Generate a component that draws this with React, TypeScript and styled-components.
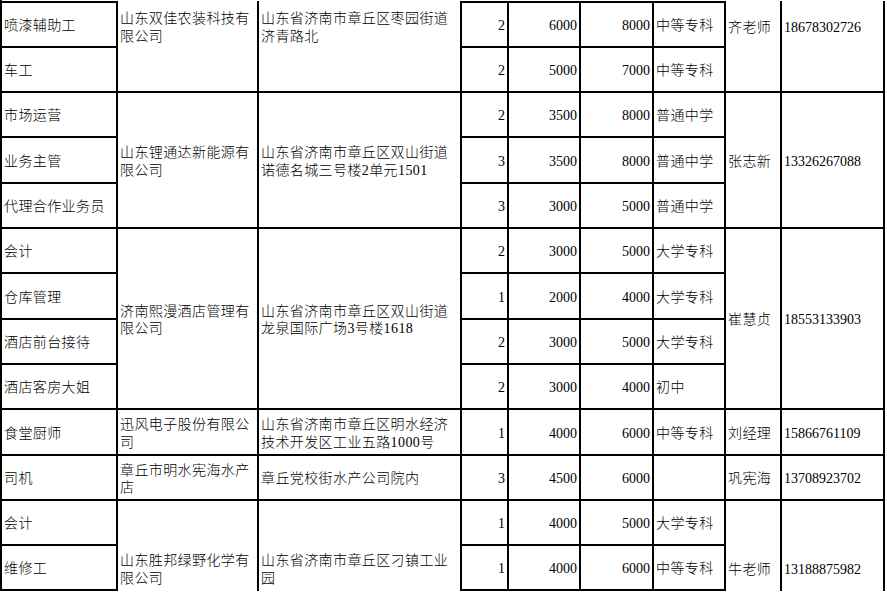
import styled, { createGlobalStyle } from "styled-components";

const GlobalStyle = createGlobalStyle`
  body {
    margin: 0;
    background: #fff;
  }
`;

const Sheet = styled.div`
  display: grid;
  grid-template-columns: 116px 141px 203px 47px 72px 73px 72px 56px 103px;
  grid-template-rows: 47px 45px 45px 46px 45px 45px 46px 45px 45px 46px 45px 45px 45px;
  width: max-content;
  padding-top: 1px;
  border-left: 2px solid #000;
  font-family: "Liberation Serif", "Noto Sans CJK SC", serif;
  font-size: 14px;
  font-weight: 300;
  line-height: 17.5px;
  color: #000;
`;

type CellProps = {
  $span?: number;
  $right?: boolean;
  $top?: boolean;
  $open?: boolean;
  $lift?: number;
  $drop?: number;
  $num?: boolean;
};

const Cell = styled.div<CellProps>`
  grid-row: span ${(p) => p.$span ?? 1};
  display: flex;
  align-items: center;
  justify-content: ${(p) => (p.$right ? "flex-end" : "flex-start")};
  box-sizing: border-box;
  min-width: 0;
  border-right: 2px solid #000;
  border-bottom: ${(p) => (p.$open ? "none" : "2px solid #000")};
  border-top: ${(p) => (p.$top ? "2px solid #000" : "none")};
  padding: ${(p) => (p.$drop ?? 0) + 3}px 2px ${(p) => p.$lift ?? 0}px 2px;
  letter-spacing: ${(p) => (p.$num ? "0" : "0.4px")};
  word-break: break-all;
`;

type Job = {
  title: string;
  count: number;
  min: number;
  max: number;
  edu: string;
};

type Group = {
  company: string;
  address: string;
  contact: string;
  phone: string;
  jobs: Job[];
  edge?: "top" | "bottom";
};

const groups: Group[] = [
  {
    company: "山东双佳农装科技有限公司",
    address: "山东省济南市章丘区枣园街道济青路北",
    contact: "齐老师",
    phone: "18678302726",
    edge: "top",
    jobs: [
      { title: "喷漆辅助工", count: 2, min: 6000, max: 8000, edu: "中等专科" },
      { title: "车工", count: 2, min: 5000, max: 7000, edu: "中等专科" },
    ],
  },
  {
    company: "山东锂通达新能源有限公司",
    address: "山东省济南市章丘区双山街道诺德名城三号楼2单元1501",
    contact: "张志新",
    phone: "13326267088",
    jobs: [
      { title: "市场运营", count: 2, min: 3500, max: 8000, edu: "普通中学" },
      { title: "业务主管", count: 3, min: 3500, max: 8000, edu: "普通中学" },
      { title: "代理合作业务员", count: 3, min: 3000, max: 5000, edu: "普通中学" },
    ],
  },
  {
    company: "济南熙漫酒店管理有限公司",
    address: "山东省济南市章丘区双山街道龙泉国际广场3号楼1618",
    contact: "崔慧贞",
    phone: "18553133903",
    jobs: [
      { title: "会计", count: 2, min: 3000, max: 5000, edu: "大学专科" },
      { title: "仓库管理", count: 1, min: 2000, max: 4000, edu: "大学专科" },
      { title: "酒店前台接待", count: 2, min: 3000, max: 5000, edu: "大学专科" },
      { title: "酒店客房大姐", count: 2, min: 3000, max: 4000, edu: "初中" },
    ],
  },
  {
    company: "迅风电子股份有限公司",
    address: "山东省济南市章丘区明水经济技术开发区工业五路1000号",
    contact: "刘经理",
    phone: "15866761109",
    jobs: [{ title: "食堂厨师", count: 1, min: 4000, max: 6000, edu: "中等专科" }],
  },
  {
    company: "章丘市明水宪海水产店",
    address: "章丘党校街水产公司院内",
    contact: "巩宪海",
    phone: "13708923702",
    jobs: [{ title: "司机", count: 3, min: 4500, max: 6000, edu: "" }],
  },
  {
    company: "山东胜邦绿野化学有限公司",
    address: "山东省济南市章丘区刁镇工业园",
    contact: "牛老师",
    phone: "13188875982",
    edge: "bottom",
    jobs: [
      { title: "会计", count: 1, min: 4000, max: 5000, edu: "大学专科" },
      { title: "维修工", count: 1, min: 4000, max: 6000, edu: "中等专科" },
    ],
  },
];

function GroupRows({ group }: { group: Group }) {
  const span = group.jobs.length;
  const top = group.edge === "top";
  const open = group.edge === "bottom";
  const merged = {
    $span: span,
    $open: open,
    $lift: top ? 40 : 0,
    $drop: open ? 44 : 0,
  };

  return (
    <>
      {group.jobs.map((job, i) => {
        const first = i === 0;
        const edgeTop = top && first;
        return [
          <Cell key={`t${i}`} $top={edgeTop}>
            {job.title}
          </Cell>,
          first && (
            <Cell key="company" {...merged}>
              {group.company}
            </Cell>
          ),
          first && (
            <Cell key="address" {...merged}>
              {group.address}
            </Cell>
          ),
          <Cell key={`c${i}`} $top={edgeTop} $right $num>
            {job.count}
          </Cell>,
          <Cell key={`a${i}`} $top={edgeTop} $right $num>
            {job.min}
          </Cell>,
          <Cell key={`b${i}`} $top={edgeTop} $right $num>
            {job.max}
          </Cell>,
          <Cell key={`e${i}`} $top={edgeTop}>
            {job.edu}
          </Cell>,
          first && (
            <Cell key="contact" {...merged}>
              {group.contact}
            </Cell>
          ),
          first && (
            <Cell key="phone" {...merged} $num>
              {group.phone}
            </Cell>
          ),
        ];
      })}
    </>
  );
}

export default function App() {
  return (
    <>
      <GlobalStyle />
      <Sheet>
        {groups.map((g) => (
          <GroupRows key={g.company} group={g} />
        ))}
      </Sheet>
    </>
  );
}
